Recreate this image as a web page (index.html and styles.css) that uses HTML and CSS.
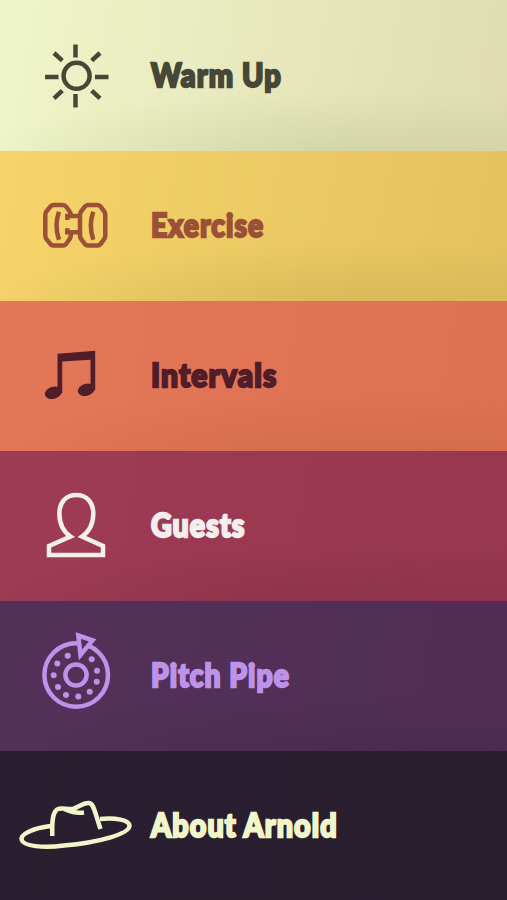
FILE: index.html
```html
<!DOCTYPE html>
<html lang="en">
<head>
<meta charset="utf-8">
<title>Menu</title>
<link rel="stylesheet" href="styles.css">
</head>
<body>
<nav class="menu">
  <a class="item warm-up">
    <svg class="icon" viewBox="0 1 151 150"><circle cx="76.6" cy="75.8" r="13"/><path d="M75.5 44.5v13M75.5 94v13.5M45 77h13.500M95 77h13.500M54 53l8.300 7.700M100 53l-8.300 7.700M54 98.300l8.300-7.700M100 98.300l-8.300-7.700"/></svg>
    <span class="label">Warm Up</span>
  </a>
  <a class="item exercise">
    <svg class="icon" viewBox="0 151 151 150"><path d="M88 204.900h9.500q2 0 3.200 1.700l3.600 5q1 1.500 1 3.400v20.500q0 2-1 3.400l-3.600 5q-1.200 1.700-3.200 1.700H88q-2 0-3.200-1.700l-3.800-5q-1-1.500-1-3.400V215q0-2 1-3.400l3.800-5q1.200-1.700 3.200-1.700zM79 216H67.300v4M71 216q0-3.500-2-5.500l-3-4q-1.200-1.600-3.200-1.600H53.500q-2 0-3.200 1.700l-4 5q-1 1.500-1 3.400v20.500q0 2 1 3.400l4 5q1.200 1.700 3.200 1.700h9.300q2 0 3.200-1.600l3-4q2-2 2-6.700M79 232.300H67.300v-4M59 211.700q-5 13.300 0 28M93.300 211.700q-5 13.300 0 28"/></svg>
    <span class="label">Exercise</span>
  </a>
  <a class="item intervals">
    <svg class="icon solid" viewBox="0 301 151 150"><path d="M57.500 353.700 95.200 350.700V390h-4.700v-30.200l-28.300 1.700V393h-4.700z"/><ellipse cx="53.300" cy="392.800" rx="8.700" ry="6" transform="rotate(-17 53.300 392.800)"/><ellipse cx="86.300" cy="389.800" rx="8.700" ry="6" transform="rotate(-17 86.300 389.800)"/></svg>
    <span class="label">Intervals</span>
  </a>
  <a class="item guests">
    <svg class="icon" viewBox="0 451 151 150"><path d="M49 546 70.500 536.500C62.500 531 59.400 524 59.400 513.500C59.400 502 66 495 76.300 495C86.600 495 93.300 502 93.300 513.500C93.300 524 90 531 82 536.500L103 546V555H49Z"/></svg>
    <span class="label">Guests</span>
  </a>
  <a class="item pitch-pipe">
    <svg class="icon" viewBox="0 601 151 150"><circle cx="76.200" cy="675" r="31.800"/><circle cx="76" cy="675" r="10.600"/><path class="pointer" d="M78.300 635.500 92.500 640.300 80.500 655Z"/><g class="dots"><circle cx="67.700" cy="655.700" r="3"/><circle cx="57.300" cy="663.500" r="3"/><circle cx="53.700" cy="675.300" r="3"/><circle cx="58" cy="687" r="3"/><circle cx="66" cy="695" r="3"/><circle cx="78.300" cy="696.500" r="3"/><circle cx="89.700" cy="691.700" r="3"/><circle cx="96.700" cy="681.700" r="3"/><circle cx="97" cy="670.700" r="3"/><circle cx="91.700" cy="659.300" r="3"/></g></svg>
    <span class="label">Pitch Pipe</span>
  </a>
  <a class="item about">
    <svg class="icon" viewBox="0 751 151 150"><path d="M50.500 826C34 828 20 834 21.700 840C23.500 846 43 848.500 64 845.500C98 842.500 130 834 129.500 825.500C129 820 116 817.500 100 819M52.300 836C52 826 51.500 810 59 808.800C63 808 68 809.500 73 809C80 806 84 802.500 89 803C94 803.500 95 813 100.500 829M64 809C70 811.500 75 813.500 84 812.500"/></svg>
    <span class="label">About Arnold</span>
  </a>
</nav>
</body>
</html>
```
FILE: styles.css
```css
body {
  margin: 0;
}

.menu {
  display: grid;
  grid-template-rows: 151px repeat(4, 150px) 149px;
  height: 900px;
  overflow: hidden;
}

.item {
  display: flex;
  align-items: center;
  overflow: hidden;
  color: var(--ink);
  background:
    radial-gradient(ellipse 75% 48% at 68% 108%, var(--shade), transparent),
    linear-gradient(100deg, var(--from), var(--to));
}

.icon {
  flex: none;
  width: 151px;
  height: 150px;
  fill: none;
  stroke: currentColor;
  stroke-width: 4.5;
}

.solid {
  fill: currentColor;
  stroke: none;
}

.dots {
  fill: currentColor;
  stroke: none;
}

.pointer {
  fill: #533058;
}

.label {
  margin-bottom: 2px;
  font: 900 32.5px/40px Lato, sans-serif;
  letter-spacing: 1.2px;
  white-space: nowrap;
  -webkit-text-stroke: 2.3px currentColor;
  transform: scaleX(var(--squeeze));
  transform-origin: left center;
}

.warm-up {
  --ink: #474737;
  --from: #eff6c9;
  --to: #dfdcb1;
  --shade: rgba(170, 180, 125, 0.35);
  --squeeze: 0.89;
}

.exercise {
  --ink: #9c5038;
  --from: #f6d46a;
  --to: #e4c15d;
  --shade: rgba(180, 155, 70, 0.35);
  --squeeze: 0.87;
}

.intervals {
  --ink: #501d28;
  --from: #e47757;
  --to: #dd7151;
  --shade: rgba(180, 90, 65, 0.3);
  --squeeze: 0.925;
}

.guests {
  --ink: #f4eeec;
  --from: #9e3b55;
  --to: #983750;
  --shade: rgba(110, 40, 60, 0.35);
  --squeeze: 0.88;
}

.pitch-pipe {
  --ink: #be92e8;
  --from: #533158;
  --to: #512d55;
  --shade: rgba(65, 38, 70, 0.35);
  --squeeze: 0.87;
}

.about {
  --ink: #f1f6ca;
  --from: #2a1f30;
  --to: #281e2e;
  --shade: transparent;
  --squeeze: 0.885;
}
```
